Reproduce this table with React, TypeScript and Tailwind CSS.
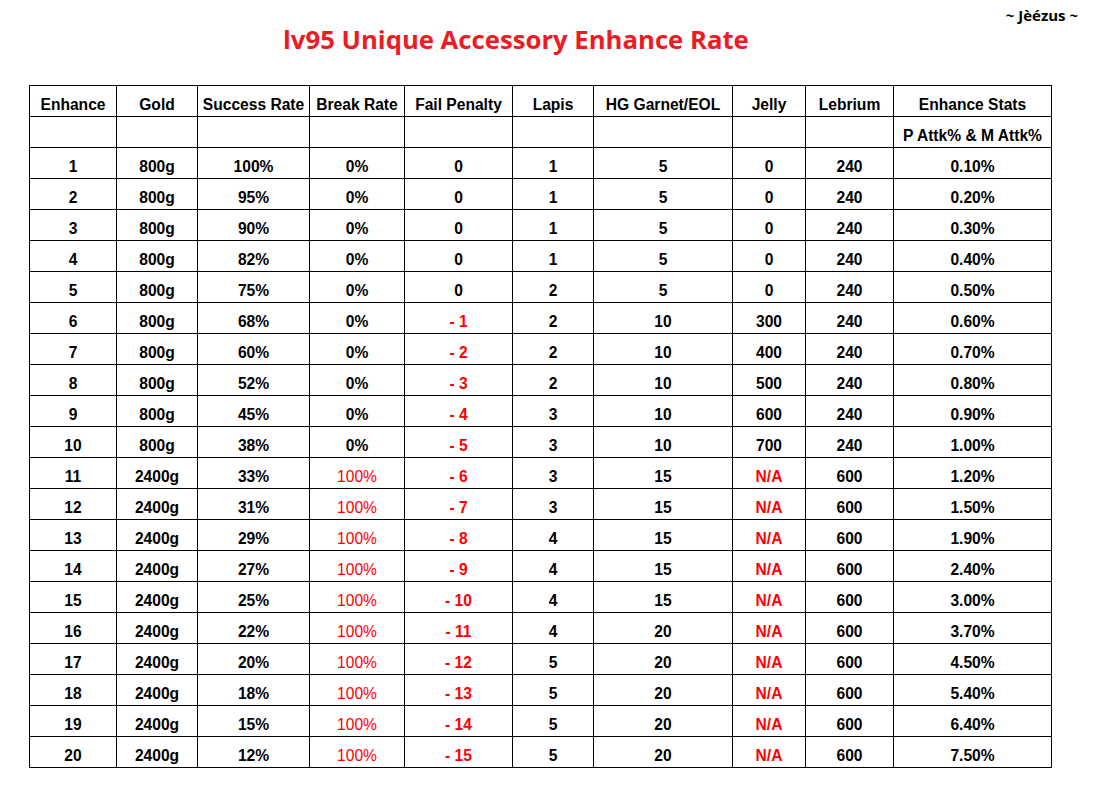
import React from 'react'

const RED = 'text-[#ff0000]'

const headers = [
  'Enhance',
  'Gold',
  'Success Rate',
  'Break Rate',
  'Fail Penalty',
  'Lapis',
  'HG Garnet/EOL',
  'Jelly',
  'Lebrium',
  'Enhance Stats',
]

const colWidths = [87, 81, 112, 95, 108, 81, 139, 73, 88, 158]

const success = [100, 95, 90, 82, 75, 68, 60, 52, 45, 38, 33, 31, 29, 27, 25, 22, 20, 18, 15, 12]
const lapis = [1, 1, 1, 1, 2, 2, 2, 2, 3, 3, 3, 3, 4, 4, 4, 4, 5, 5, 5, 5]
const garnet = [5, 5, 5, 5, 5, 10, 10, 10, 10, 10, 15, 15, 15, 15, 15, 20, 20, 20, 20, 20]
const jelly = [0, 0, 0, 0, 0, 300, 400, 500, 600, 700]
const stats = [
  '0.10%', '0.20%', '0.30%', '0.40%', '0.50%', '0.60%', '0.70%', '0.80%', '0.90%', '1.00%',
  '1.20%', '1.50%', '1.90%', '2.40%', '3.00%', '3.70%', '4.50%', '5.40%', '6.40%', '7.50%',
]

// cells are bottom aligned, like a spreadsheet export
const Cell: React.FC<{ children?: React.ReactNode; className?: string }> = ({ children, className }) => (
  <td
    className={`h-[31px] border border-black p-0 pb-[3px] text-center align-bottom leading-[17px] ${className ?? 'font-bold'}`}
  >
    {children}
  </td>
)

export default function App() {
  return (
    <div className="h-[798px] w-[1093px] overflow-hidden bg-white text-black">
      {/* author */}
      <div className="flex h-[27px] justify-end pr-[15px] pt-[6px]">
        <span className="text-[15px] font-bold leading-[19px]" style={{ fontFamily: '"Open Sans", sans-serif' }}>
          ~ Jèézus ~
        </span>
      </div>

      {/* title */}
      <div className="h-[58px] pl-[283px]">
        <h1
          className="text-[25.7px] font-bold leading-[26px] text-[#ed1c24]"
          style={{ fontFamily: '"Open Sans", sans-serif' }}
        >
          lv95 Unique Accessory Enhance Rate
        </h1>
      </div>

      <div className="pl-[29px]">
        <table
          className="w-[1023px] table-fixed border-collapse text-[15.6px]"
          style={{ fontFamily: '"Liberation Sans", Arial, sans-serif' }}
        >
          <colgroup>
            {colWidths.map((w, i) => (
              <col key={i} style={{ width: w }} />
            ))}
          </colgroup>
          <thead>
            <tr>
              {headers.map((h) => (
                <Cell key={h}>{h}</Cell>
              ))}
            </tr>
            <tr>
              {headers.slice(0, 9).map((h) => (
                <Cell key={h} />
              ))}
              <Cell>P Attk% &amp; M Attk%</Cell>
            </tr>
          </thead>
          <tbody>
            {success.map((s, i) => {
              const lvl = i + 1
              const high = lvl > 10
              return (
                <tr key={lvl}>
                  <Cell>{lvl}</Cell>
                  <Cell>{high ? '2400g' : '800g'}</Cell>
                  <Cell>{s}%</Cell>
                  {high ? <Cell className={`font-normal ${RED}`}>100%</Cell> : <Cell>0%</Cell>}
                  {lvl > 5 ? <Cell className={`font-bold ${RED}`}>- {lvl - 5}</Cell> : <Cell>0</Cell>}
                  <Cell>{lapis[i]}</Cell>
                  <Cell>{garnet[i]}</Cell>
                  {high ? <Cell className={`font-bold ${RED}`}>N/A</Cell> : <Cell>{jelly[i]}</Cell>}
                  <Cell>{high ? 600 : 240}</Cell>
                  <Cell>{stats[i]}</Cell>
                </tr>
              )
            })}
          </tbody>
        </table>
      </div>
    </div>
  )
}
